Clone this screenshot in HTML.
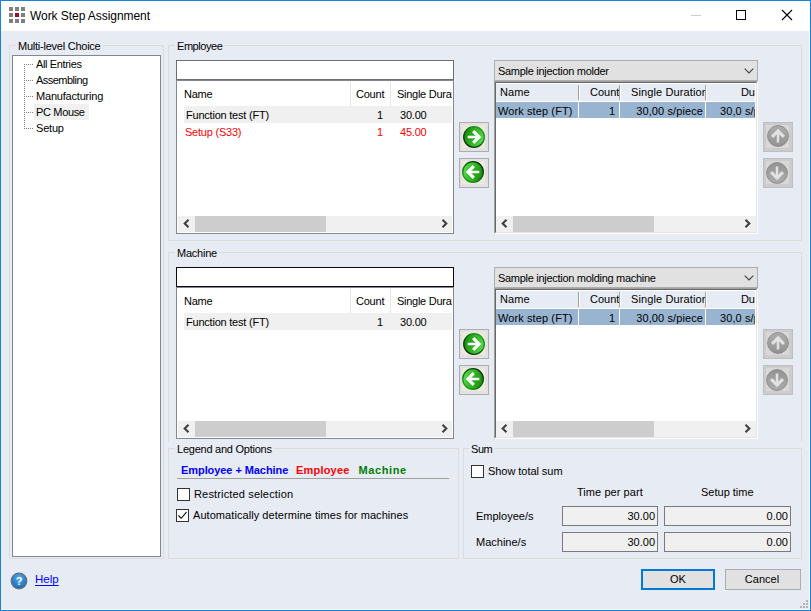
<!DOCTYPE html>
<html>
<head>
<meta charset="utf-8">
<title>Work Step Assignment</title>
<style>
html,body{margin:0;padding:0;}
body{width:811px;height:611px;overflow:hidden;background:#e7ebf3;font-family:"Liberation Sans",sans-serif;font-size:11px;color:#000;position:relative;}
*{box-sizing:border-box;}
.abs{position:absolute;}
#win{position:absolute;left:0;top:0;width:811px;height:611px;border:1px solid #1883d7;background:#e7ebf3;}
#title{position:absolute;left:1px;top:1px;width:809px;height:30px;background:#fff;}
#title .t{position:absolute;left:29px;top:7px;font-size:12px;line-height:15px;white-space:nowrap;letter-spacing:-0.06px;}
.gb{position:absolute;border:1px solid #dcdcdc;}
.gbl{position:absolute;background:#e7ebf3;padding:0 2px;line-height:13px;white-space:nowrap;letter-spacing:-0.24px;}
.t{position:absolute;white-space:nowrap;line-height:13px;letter-spacing:-0.22px;}
.r{text-align:right;}
.red{color:#ff0000;}
.tree{position:absolute;left:12px;top:55px;width:149px;height:502px;background:#fff;border:1px solid #828790;}
.inp{position:absolute;background:#fff;border:1px solid #7a7a7a;}
.list{position:absolute;background:#fff;border:1px solid #828790;overflow:hidden;}
.rlist{position:absolute;border:1px solid;border-color:#a0a0a0 #fff #fff #a0a0a0;}
.rlist .ri{position:absolute;left:0;top:0;right:0;bottom:0;background:#fff;border:1px solid;border-color:#696969 #e3e3e3 #e3e3e3 #696969;overflow:hidden;}
.combo{position:absolute;background:#e1e1e1;border:1px solid #adadad;}
.btn{position:absolute;background:#e1e1e1;border:1px solid #adadad;}
.sb{position:absolute;background:#f0f0f0;height:16px;}
.sb .th{position:absolute;top:0;height:16px;background:#cdcdcd;}
.ro{position:absolute;background:#f0f0f0;border:1px solid #7a7a7a;}
.cb{position:absolute;width:13px;height:13px;background:#fff;border:1px solid #333;}
.hsep{position:absolute;width:1px;background:#e5e5e5;}
.rh{position:absolute;left:0;top:1px;height:17px;background:#e7ebf3;}
.rsep{position:absolute;top:2px;width:2px;height:15px;border-left:1px solid #a0a0a0;border-right:1px solid #fff;}
.sel{position:absolute;background:#99b4d1;height:16px;}
.ib{position:absolute;width:30px;height:30px;background:#e1e1e1;border:1px solid #adadad;}
.ib .in{position:absolute;left:2px;top:2px;width:23px;height:23px;background:#ece9dd;}
.ibd{position:absolute;width:30px;height:30px;background:#cccccc;border:1px solid #bfbfbf;}
.ibd .in{position:absolute;left:2px;top:2px;width:23px;height:23px;background:#d8d8d8;}
</style>
</head>
<body>

<div id="win"></div>
<div id="title">
  <svg class="abs" style="left:8px;top:6px" width="17" height="17" viewBox="0 0 17 17">
    <g fill="#808080">
      <rect x="0" y="0" width="4" height="4"/><rect x="6" y="0" width="4" height="4"/><rect x="12" y="0" width="4" height="4"/>
      <rect x="0" y="6" width="4" height="4"/><rect x="12" y="6" width="4" height="4"/>
      <rect x="0" y="12" width="4" height="4"/><rect x="6" y="12" width="4" height="4"/><rect x="12" y="12" width="4" height="4"/>
    </g>
    <rect x="6" y="6" width="4" height="4" fill="#a00d1c"/>
  </svg>
  <div class="t" style="top:8px">Work Step Assignment</div>
  <div class="abs" style="left:690px;top:14px;width:10px;height:1px;background:#cccccc"></div>
  <div class="abs" style="left:735px;top:9px;width:10px;height:10px;border:1px solid #000"></div>
  <svg class="abs" style="left:780px;top:8px" width="12" height="12" viewBox="0 0 12 12"><path d="M1 1 L11 11 M11 1 L1 11" stroke="#000" stroke-width="1.1" fill="none"/></svg>
</div>

<svg width="0" height="0" style="position:absolute">
<defs>
<linearGradient id="gg" x1="0" y1="0.35" x2="1" y2="0.65">
  <stop offset="0" stop-color="#1c8a0e"/><stop offset="0.35" stop-color="#2ba81e"/><stop offset="0.7" stop-color="#3ec432"/><stop offset="1" stop-color="#66de58"/>
</linearGradient>
<linearGradient id="ggs" x1="0.15" y1="0.85" x2="0.85" y2="0.15">
  <stop offset="0" stop-color="#042c04"/><stop offset="0.5" stop-color="#0b6a0b"/><stop offset="1" stop-color="#1c9a1c"/>
</linearGradient>
<linearGradient id="gd" x1="0" y1="0" x2="0" y2="1">
  <stop offset="0" stop-color="#adadad"/><stop offset="0.5" stop-color="#a0a0a0"/><stop offset="1" stop-color="#929292"/>
</linearGradient>
<linearGradient id="gd2" x1="0" y1="0" x2="0" y2="1">
  <stop offset="0" stop-color="#929292"/><stop offset="0.5" stop-color="#a0a0a0"/><stop offset="1" stop-color="#adadad"/>
</linearGradient>
<radialGradient id="gh" cx="0.5" cy="0.3" r="0.75">
  <stop offset="0" stop-color="#58a8e6"/><stop offset="0.55" stop-color="#2c84cf"/><stop offset="1" stop-color="#1a66ad"/>
</radialGradient>
<symbol id="arrR" viewBox="0 0 22 22">
  <circle cx="11" cy="11" r="10.3" fill="url(#gg)" stroke="url(#ggs)" stroke-width="1.3"/>
  <path d="M4.7 11 H15" fill="none" stroke="#fff" stroke-width="2.5"/>
  <path d="M10.2 5.1 L16.1 11 L10.2 16.9" fill="none" stroke="#fff" stroke-width="3.1" stroke-linejoin="miter"/>
</symbol>
<symbol id="arrL" viewBox="0 0 22 22">
  <g transform="rotate(180 11 11)">
  <circle cx="11" cy="11" r="10.3" fill="url(#gg)" stroke="url(#ggs)" stroke-width="1.3"/>
  <path d="M4.7 11 H15" fill="none" stroke="#fff" stroke-width="2.5"/>
  <path d="M10.2 5.1 L16.1 11 L10.2 16.9" fill="none" stroke="#fff" stroke-width="3.1" stroke-linejoin="miter"/>
  </g>
</symbol>
<symbol id="arrU" viewBox="0 0 22 22">
  <circle cx="11" cy="11" r="10.4" fill="url(#gd)" stroke="#8c8c8c" stroke-width="1"/>
  <path d="M11 17.5 V7" fill="none" stroke="#e2e2e2" stroke-width="2.5"/>
  <path d="M5.1 11.8 L11 5.9 L16.9 11.8" fill="none" stroke="#e2e2e2" stroke-width="3.1" stroke-linejoin="miter"/>
</symbol>
<symbol id="arrD" viewBox="0 0 22 22">
  <circle cx="11" cy="11" r="10.4" fill="url(#gd2)" stroke="#8c8c8c" stroke-width="1"/>
  <path d="M11 4.5 V15" fill="none" stroke="#e2e2e2" stroke-width="2.5"/>
  <path d="M5.1 10.2 L11 16.1 L16.9 10.2" fill="none" stroke="#e2e2e2" stroke-width="3.1" stroke-linejoin="miter"/>
</symbol>
<symbol id="chevL" viewBox="0 0 7 9"><path d="M5.5 0.8 L1.7 4.5 L5.5 8.2" fill="none" stroke="#404040" stroke-width="2.1"/></symbol>
<symbol id="chevR" viewBox="0 0 7 9"><path d="M1.5 0.8 L5.3 4.5 L1.5 8.2" fill="none" stroke="#404040" stroke-width="2.1"/></symbol>
<symbol id="chevD" viewBox="0 0 10 6"><path d="M0.7 0.7 L5 5 L9.3 0.7" fill="none" stroke="#404040" stroke-width="1.1"/></symbol>
</defs>
</svg>

<!-- Multi-level Choice -->
<div class="gb" style="left:9px;top:45px;width:155px;height:514px"></div>
<div class="gbl" style="left:16px;top:40px">Multi-level Choice</div>
<div class="tree"></div>
<div class="abs" style="left:24px;top:64px;width:1px;height:65px;background:repeating-linear-gradient(to bottom,#808080 0 1px,transparent 1px 2px)"></div>
<div class="abs" style="left:25px;top:64px;width:8px;height:1px;background:repeating-linear-gradient(to right,transparent 0 1px,#808080 1px 2px)"></div>
<div class="t" style="left:36px;top:58px;letter-spacing:-0.36px">All Entries</div>
<div class="abs" style="left:25px;top:80px;width:8px;height:1px;background:repeating-linear-gradient(to right,transparent 0 1px,#808080 1px 2px)"></div>
<div class="t" style="left:36px;top:74px;letter-spacing:-0.53px">Assembling</div>
<div class="abs" style="left:25px;top:96px;width:8px;height:1px;background:repeating-linear-gradient(to right,transparent 0 1px,#808080 1px 2px)"></div>
<div class="t" style="left:36px;top:90px;letter-spacing:-0.2px">Manufacturing</div>
<div class="abs" style="left:25px;top:112px;width:8px;height:1px;background:repeating-linear-gradient(to right,transparent 0 1px,#808080 1px 2px)"></div>
<div class="abs" style="left:34px;top:104px;width:55px;height:16px;background:#f0f0f0"></div>
<div class="t" style="left:36px;top:106px;letter-spacing:-0.34px">PC Mouse</div>
<div class="abs" style="left:25px;top:128px;width:8px;height:1px;background:repeating-linear-gradient(to right,transparent 0 1px,#808080 1px 2px)"></div>
<div class="t" style="left:36px;top:122px;letter-spacing:-0.2px">Setup</div>

<!-- Employee -->
<div class="gb" style="left:168px;top:45px;width:634px;height:196px"></div>
<div class="gbl" style="left:175px;top:40px;letter-spacing:-0.45px">Employee</div>
<div class="inp" style="left:176px;top:60px;width:278px;height:20px;border-color:#6e6e6e"></div>
<div class="list" style="left:176px;top:80px;width:278px;height:154px"></div>
<div class="hsep" style="left:350px;top:82px;height:24px"></div>
<div class="hsep" style="left:390px;top:82px;height:24px"></div>
<div class="t" style="left:184px;top:88px">Name</div>
<div class="t" style="left:356px;top:88px">Count</div>
<div class="t" style="left:397px;top:88px;width:55px;overflow:hidden;letter-spacing:-0.27px">Single Duration</div>
<div class="abs" style="left:184px;top:106px;width:268px;height:17px;background:#f0f0f0"></div>
<div class="t" style="left:186px;top:109px">Function test (FT)</div>
<div class="t r" style="left:363px;width:20px;top:109px">1</div>
<div class="t" style="left:400px;top:109px">30.00</div>
<div class="t red" style="left:185px;top:126px">Setup (S33)</div>
<div class="t r red" style="left:363px;width:20px;top:126px">1</div>
<div class="t red" style="left:400px;top:126px">45.00</div>
<div class="sb" style="left:178px;top:216px;width:274px"><div class="th" style="left:17px;width:131px"></div><svg class="abs" style="left:5px;top:3px" width="7" height="9"><use href="#chevL"/></svg><svg class="abs" style="left:263px;top:3px" width="7" height="9"><use href="#chevR"/></svg></div>

<div class="combo" style="left:494px;top:60px;width:264px;height:21px"></div>
<div class="t" style="left:498px;top:65px;letter-spacing:-0.29px">Sample injection molder</div>
<svg class="abs" style="left:744px;top:68px" width="10" height="6"><use href="#chevD"/></svg>
<div class="rlist" style="left:494px;top:81px;width:264px;height:153px"><div class="ri"><div class="rh" style="width:259px"></div><div class="rsep" style="left:82px"></div><div class="rsep" style="left:123px"></div><div class="rsep" style="left:209px"></div><div class="t" style="left:4px;top:3px;letter-spacing:0.1px">Name</div><div class="t" style="left:94px;width:29px;top:3px;overflow:hidden;letter-spacing:0">Count</div><div class="t" style="left:135px;width:74px;top:3px;overflow:hidden;letter-spacing:0.12px">Single Duration</div><div class="t" style="left:245px;top:3px">Du</div><div class="sel" style="left:0;top:19px;width:82px"></div><div class="sel" style="left:83px;top:19px;width:40px"></div><div class="sel" style="left:124px;top:19px;width:85px"></div><div class="sel" style="left:210px;top:19px;width:49px"></div><div class="t" style="left:2px;top:22px;letter-spacing:0.1px">Work step (FT)</div><div class="t r" style="left:99px;width:20px;top:22px">1</div><div class="t r" style="left:130px;width:77px;top:22px;letter-spacing:0.1px">30,00 s/piece</div><div class="t" style="left:224px;top:22px;width:35px;overflow:hidden;letter-spacing:0.1px">30,0 s/piece</div><div class="sb" style="left:0;top:133px;width:260px;height:16px"><div class="th" style="left:17px;width:141px"></div><svg class="abs" style="left:5px;top:3px" width="7" height="9"><use href="#chevL"/></svg><svg class="abs" style="left:248px;top:3px" width="7" height="9"><use href="#chevR"/></svg></div></div></div>
<div class="ib" style="left:459px;top:122px"><div class="in"></div><svg class="abs" style="left:3px;top:3px" width="22" height="22"><use href="#arrR"/></svg></div>
<div class="ib" style="left:459px;top:158px"><div class="in"></div><svg class="abs" style="left:2px;top:2px" width="22" height="22"><use href="#arrL"/></svg></div>
<div class="ibd" style="left:763px;top:122px"><div class="in"></div><svg class="abs" style="left:3px;top:2px" width="22" height="22"><use href="#arrU"/></svg></div>
<div class="ibd" style="left:763px;top:158px"><div class="in"></div><svg class="abs" style="left:2px;top:3px" width="22" height="22"><use href="#arrD"/></svg></div>

<!-- Machine -->
<div class="gb" style="left:168px;top:252px;width:634px;height:190px;border-bottom:none"></div>
<div class="gbl" style="left:175px;top:247px">Machine</div>
<div class="inp" style="left:176px;top:267px;width:278px;height:20px;border-color:#0a0a0a"></div>
<div class="list" style="left:176px;top:287px;width:278px;height:152px"></div>
<div class="hsep" style="left:350px;top:289px;height:24px"></div>
<div class="hsep" style="left:390px;top:289px;height:24px"></div>
<div class="t" style="left:184px;top:295px">Name</div>
<div class="t" style="left:356px;top:295px">Count</div>
<div class="t" style="left:397px;top:295px;width:55px;overflow:hidden;letter-spacing:-0.27px">Single Duration</div>
<div class="abs" style="left:184px;top:313px;width:268px;height:17px;background:#f0f0f0"></div>
<div class="t" style="left:186px;top:316px">Function test (FT)</div>
<div class="t r" style="left:363px;width:20px;top:316px">1</div>
<div class="t" style="left:400px;top:316px">30.00</div>
<div class="sb" style="left:178px;top:421px;width:274px"><div class="th" style="left:17px;width:131px"></div><svg class="abs" style="left:5px;top:3px" width="7" height="9"><use href="#chevL"/></svg><svg class="abs" style="left:263px;top:3px" width="7" height="9"><use href="#chevR"/></svg></div>

<div class="combo" style="left:494px;top:267px;width:264px;height:21px"></div>
<div class="t" style="left:498px;top:272px;letter-spacing:-0.29px">Sample injection molding machine</div>
<svg class="abs" style="left:744px;top:275px" width="10" height="6"><use href="#chevD"/></svg>
<div class="rlist" style="left:494px;top:288px;width:264px;height:151px"><div class="ri"><div class="rh" style="width:259px"></div><div class="rsep" style="left:82px"></div><div class="rsep" style="left:123px"></div><div class="rsep" style="left:209px"></div><div class="t" style="left:4px;top:3px;letter-spacing:0.1px">Name</div><div class="t" style="left:94px;width:29px;top:3px;overflow:hidden;letter-spacing:0">Count</div><div class="t" style="left:135px;width:74px;top:3px;overflow:hidden;letter-spacing:0.12px">Single Duration</div><div class="t" style="left:245px;top:3px">Du</div><div class="sel" style="left:0;top:19px;width:82px"></div><div class="sel" style="left:83px;top:19px;width:40px"></div><div class="sel" style="left:124px;top:19px;width:85px"></div><div class="sel" style="left:210px;top:19px;width:49px"></div><div class="t" style="left:2px;top:22px;letter-spacing:0.1px">Work step (FT)</div><div class="t r" style="left:99px;width:20px;top:22px">1</div><div class="t r" style="left:130px;width:77px;top:22px;letter-spacing:0.1px">30,00 s/piece</div><div class="t" style="left:224px;top:22px;width:35px;overflow:hidden;letter-spacing:0.1px">30,0 s/piece</div><div class="sb" style="left:0;top:131px;width:260px;height:16px"><div class="th" style="left:17px;width:141px"></div><svg class="abs" style="left:5px;top:3px" width="7" height="9"><use href="#chevL"/></svg><svg class="abs" style="left:248px;top:3px" width="7" height="9"><use href="#chevR"/></svg></div></div></div>
<div class="ib" style="left:459px;top:329px"><div class="in"></div><svg class="abs" style="left:3px;top:3px" width="22" height="22"><use href="#arrR"/></svg></div>
<div class="ib" style="left:459px;top:365px"><div class="in"></div><svg class="abs" style="left:2px;top:2px" width="22" height="22"><use href="#arrL"/></svg></div>
<div class="ibd" style="left:763px;top:329px"><div class="in"></div><svg class="abs" style="left:3px;top:2px" width="22" height="22"><use href="#arrU"/></svg></div>
<div class="ibd" style="left:763px;top:365px"><div class="in"></div><svg class="abs" style="left:2px;top:3px" width="22" height="22"><use href="#arrD"/></svg></div>

<!-- Legend -->
<div class="gb" style="left:168px;top:448px;width:291px;height:111px"></div>
<div class="gbl" style="left:175px;top:443px">Legend and Options</div>
<div class="t" style="left:181px;top:464px;font-weight:bold;color:#0000ff;letter-spacing:-0.07px">Employee + Machine</div>
<div class="t" style="left:296px;top:464px;font-weight:bold;color:#ff0000;letter-spacing:0.2px">Employee</div>
<div class="t" style="left:358.5px;top:464px;font-weight:bold;color:#008000;letter-spacing:0.6px">Machine</div>
<div class="abs" style="left:177px;top:478px;width:272px;height:1px;background:#a0a0a0"></div>
<div class="cb" style="left:177px;top:488px"></div>
<div class="t" style="left:194px;top:488px;letter-spacing:0.16px">Restricted selection</div>
<div class="cb" style="left:176px;top:509px"></div>
<svg class="abs" style="left:176px;top:509px" width="13" height="13" viewBox="0 0 13 13"><path d="M2.5 6.5 L5.2 9.3 L10.5 3.2" fill="none" stroke="#000" stroke-width="1.1"/></svg>
<div class="t" style="left:193px;top:509px;letter-spacing:0.06px">Automatically determine times for machines</div>
<!-- Sum -->
<div class="gb" style="left:463px;top:448px;width:339px;height:111px"></div>
<div class="gbl" style="left:469px;top:443px;letter-spacing:-0.45px">Sum</div>
<div class="cb" style="left:471px;top:465px"></div>
<div class="t" style="left:488px;top:465px;letter-spacing:-0.05px">Show total sum</div>
<div class="t" style="left:577px;top:486px;letter-spacing:0.06px">Time per part</div>
<div class="t" style="left:701px;top:486px;letter-spacing:0px">Setup time</div>
<div class="t" style="left:476px;top:510px;letter-spacing:0px">Employee/s</div>
<div class="t" style="left:476px;top:536px;letter-spacing:0px">Machine/s</div>
<div class="ro" style="left:562px;top:506px;width:96px;height:20px"></div>
<div class="ro" style="left:664px;top:506px;width:127px;height:20px"></div>
<div class="ro" style="left:562px;top:532px;width:96px;height:20px"></div>
<div class="ro" style="left:664px;top:532px;width:127px;height:20px"></div>
<div class="t r" style="left:600px;width:55px;top:510px;letter-spacing:0">30.00</div>
<div class="t r" style="left:733px;width:55px;top:510px;letter-spacing:0">0.00</div>
<div class="t r" style="left:600px;width:55px;top:536px;letter-spacing:0">30.00</div>
<div class="t r" style="left:733px;width:55px;top:536px;letter-spacing:0">0.00</div>
<!-- bottom -->
<svg class="abs" style="left:10px;top:572px" width="18" height="18" viewBox="0 0 18 18">
  <circle cx="9" cy="9" r="7.8" fill="url(#gh)" stroke="#6a7078" stroke-width="1.2"/>
  <text x="9" y="13" text-anchor="middle" font-family="Liberation Sans" font-weight="bold" font-size="11" fill="#fff">?</text>
</svg>
<div class="t" style="left:35px;top:573px;font-size:11.5px;color:#0000ff;text-decoration:underline;text-underline-offset:2px;letter-spacing:0">Help</div>
<div class="abs" style="left:641px;top:569px;width:74px;height:21px;background:#e1e1e1;border:2px solid #0078d7"></div>
<div class="t" style="left:641px;width:74px;top:573px;text-align:center;letter-spacing:0">OK</div>
<div class="abs" style="left:725px;top:569px;width:76px;height:21px;background:#e1e1e1;border:1px solid #adadad"></div>
<div class="t" style="left:724px;width:76px;top:573px;text-align:center;letter-spacing:0.05px">Cancel</div>
<svg class="abs" style="left:800px;top:600px" width="8" height="8" viewBox="0 0 8 8"><g fill="#b4b4b4">
<rect x="6" y="0" width="2" height="2"/><rect x="3" y="3" width="2" height="2"/><rect x="6" y="3" width="2" height="2"/>
<rect x="0" y="6" width="2" height="2"/><rect x="3" y="6" width="2" height="2"/><rect x="6" y="6" width="2" height="2"/>
</g></svg>
<div class="abs" style="left:809px;top:31px;width:1px;height:579px;background:#f6f8fb"></div>
<div class="abs" style="left:1px;top:609px;width:809px;height:1px;background:#f6f8fb"></div>

</body>
</html>
